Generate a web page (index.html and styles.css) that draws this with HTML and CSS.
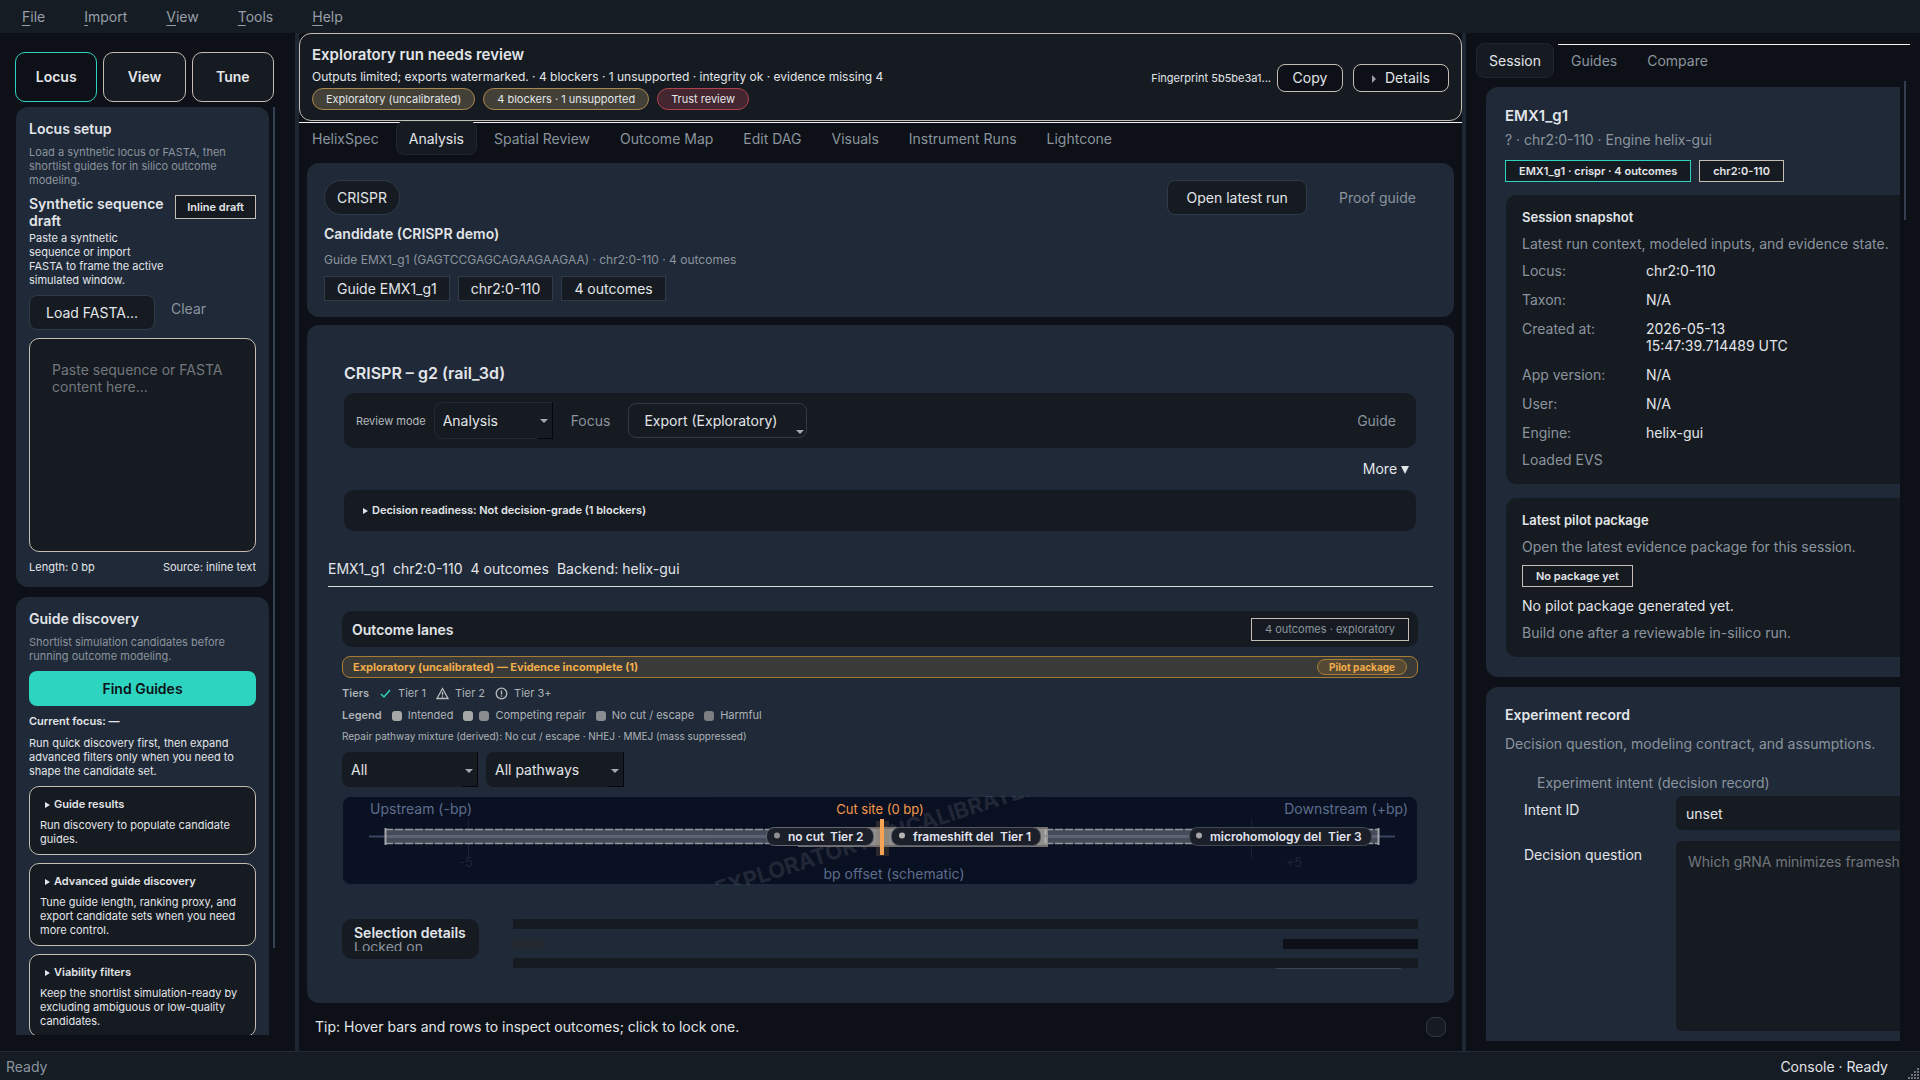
FILE: index.html
```html
<!DOCTYPE html>
<html lang="en">
<head>
<meta charset="utf-8">
<title>Helix</title>
<link rel="stylesheet" href="styles.css">
</head>
<body>
<div class="app">
  <nav class="menubar">
    <a href="#file"><u>F</u>ile</a>
    <a href="#import"><u>I</u>mport</a>
    <a href="#view"><u>V</u>iew</a>
    <a href="#tools"><u>T</u>ools</a>
    <a href="#help"><u>H</u>elp</a>
  </nav>

  <div class="workspace">
    <aside class="left">
      <div class="modes">
        <button class="mode mode-on">Locus</button>
        <button class="mode">View</button>
        <button class="mode">Tune</button>
      </div>
      <div class="left-scroll">
        <div class="left-cards">
          <section class="side-card">
            <h2 class="h-card">Locus setup</h2>
            <p class="small muted desc">Load a synthetic locus or FASTA, then shortlist guides for in silico outcome modeling.</p>
            <div class="draft">
              <div class="draft-text">
                <h3 class="h-card">Synthetic sequence draft</h3>
                <p class="small">Paste a synthetic sequence or import FASTA to frame the active simulated window.</p>
              </div>
              <span class="tag tag-draft">Inline draft</span>
            </div>
            <div class="load-row">
              <button class="btn btn-load">Load FASTA...</button>
              <button class="btn-flat">Clear</button>
            </div>
            <textarea class="seq" aria-label="Sequence" placeholder="Paste sequence or FASTA content here..."></textarea>
            <div class="seq-foot small"><span>Length: 0 bp</span><span>Source: inline text</span></div>
          </section>
          <section class="side-card">
            <h2 class="h-card">Guide discovery</h2>
            <p class="small muted desc">Shortlist simulation candidates before running outcome modeling.</p>
            <button class="btn-primary">Find Guides</button>
            <p class="small strong focus-line">Current focus: —</p>
            <p class="small">Run quick discovery first, then expand advanced filters only when you need to shape the candidate set.</p>
            <div class="fold">
              <button class="fold-head"><i class="tri-r"></i>Guide results</button>
              <p class="small">Run discovery to populate candidate guides.</p>
            </div>
            <div class="fold">
              <button class="fold-head"><i class="tri-r"></i>Advanced guide discovery</button>
              <p class="small">Tune guide length, ranking proxy, and export candidate sets when you need more control.</p>
            </div>
            <div class="fold">
              <button class="fold-head"><i class="tri-r"></i>Viability filters</button>
              <p class="small">Keep the shortlist simulation-ready by excluding ambiguous or low-quality candidates.</p>
            </div>
          </section>
        </div>
        <div class="scrollbar scrollbar-left"></div>
      </div>
    </aside>

    <div class="splitter"></div>

    <main class="center">
      <header class="banner">
        <div class="banner-text">
          <h1 class="banner-title">Exploratory run needs review</h1>
          <p class="banner-sub">Outputs limited; exports watermarked. · 4 blockers · 1 unsupported · integrity ok · evidence missing 4</p>
          <div class="pills">
            <span class="pill pill-warn">Exploratory (uncalibrated)</span>
            <span class="pill pill-warn">4 blockers · 1 unsupported</span>
            <span class="pill pill-bad">Trust review</span>
          </div>
        </div>
        <div class="banner-actions">
          <span class="small">Fingerprint 5b5be3a1...</span>
          <button class="btn-outline">Copy</button>
          <button class="btn-outline btn-details"><i class="tri-r tri-dim"></i>Details</button>
        </div>
      </header>

      <nav class="tabs tabs-main">
        <a class="tab" href="#helixspec">HelixSpec</a>
        <a class="tab tab-on" href="#analysis">Analysis</a>
        <a class="tab" href="#spatial">Spatial Review</a>
        <a class="tab" href="#map">Outcome Map</a>
        <a class="tab" href="#dag">Edit DAG</a>
        <a class="tab" href="#visuals">Visuals</a>
        <a class="tab" href="#runs">Instrument Runs</a>
        <a class="tab" href="#lightcone">Lightcone</a>
      </nav>

      <div class="center-body">
        <section class="panel candidate">
          <div class="cand-top">
            <span class="crispr">CRISPR</span>
            <div class="cand-actions">
              <button class="btn btn-open">Open latest run</button>
              <button class="btn-flat">Proof guide</button>
            </div>
          </div>
          <h2 class="h-card">Candidate (CRISPR demo)</h2>
          <p class="cand-sub">Guide EMX1_g1 (GAGTCCGAGCAGAAGAAGAA) · chr2:0-110 · 4 outcomes</p>
          <div class="chips">
            <span class="chip">Guide EMX1_g1</span>
            <span class="chip">chr2:0-110</span>
            <span class="chip">4 outcomes</span>
          </div>
        </section>

        <section class="panel run">
          <div class="run-head">
            <h2 class="run-title">CRISPR – g2 (rail_3d)</h2>
            <div class="toolbar">
              <label class="small soft" for="mode">Review mode</label>
              <span class="combo combo-mode"><select id="mode"><option>Analysis</option></select></span>
              <button class="btn-flat btn-focus">Focus</button>
              <button class="btn btn-export">Export (Exploratory)<i class="tri-d"></i></button>
              <button class="btn-flat btn-guide">Guide</button>
            </div>
            <button class="more">More <i class="tri-more"></i></button>
            <button class="decision"><i class="tri-r"></i>Decision readiness: Not decision-grade (1 blockers)</button>
          </div>

          <div class="meta"><span>EMX1_g1</span><span>chr2:0-110</span><span>4 outcomes</span><span>Backend: helix-gui</span></div>

          <div class="lanes">
            <div class="lanes-head">
              <h3 class="h-card">Outcome lanes</h3>
              <span class="lanes-tag">4 outcomes · exploratory</span>
            </div>
            <div class="alert">
              <span>Exploratory (uncalibrated) — Evidence incomplete (1)</span>
              <button class="pilot">Pilot package</button>
            </div>
            <div class="legend">
              <b>Tiers</b>
              <span class="key"><svg width="13" height="13" viewBox="0 0 13 13"><path d="M2 7l3 3 6-7" fill="none" stroke="#2dd4bf" stroke-width="1.5"/></svg>Tier 1</span>
              <span class="key"><svg width="13" height="13" viewBox="0 0 13 13"><path d="M6.500 1.500L12 11.500H1zM6.500 5v3.500M6.500 9.300v1.200" fill="none" stroke="#b9bcbc" stroke-width="1.300"/></svg>Tier 2</span>
              <span class="key"><svg width="13" height="13" viewBox="0 0 13 13"><circle cx="6.500" cy="6.500" r="5.300" fill="none" stroke="#b9bcbc" stroke-width="1.300"/><path d="M6.500 3.500v4M6.500 8.500v1.300" stroke="#b9bcbc" stroke-width="1.300"/></svg>Tier 3+</span>
            </div>
            <div class="legend legend-wide">
              <b>Legend</b>
              <span class="key"><i class="sw sw-a"></i>Intended</span>
              <span class="key"><i class="sw sw-a"></i><i class="sw sw-b"></i>Competing repair</span>
              <span class="key"><i class="sw sw-b"></i>No cut / escape</span>
              <span class="key"><i class="sw sw-c"></i>Harmful</span>
            </div>
            <p class="mixture">Repair pathway mixture (derived): No cut / escape · NHEJ · MMEJ (mass suppressed)</p>
            <div class="filters">
              <span class="combo combo-tier"><select aria-label="Tier"><option>All</option></select></span>
              <span class="combo combo-path"><select aria-label="Pathway"><option>All pathways</option></select></span>
            </div>
            <svg class="track" viewBox="0 0 1076 89" role="img" aria-label="Outcome lanes">
              <defs><clipPath id="frame"><rect width="1076" height="89" rx="8"/></clipPath></defs>
              <rect x="0.500" y="0.500" width="1075" height="88" rx="8" fill="#0a1122" stroke="#1d2b40"/>
              <g clip-path="url(#frame)">
                <path d="M126.500 24v38M909.500 24v38" stroke="#1a2235"/>
                <text class="t-tick" x="124" y="71" text-anchor="middle">-5</text>
                <text class="t-tick" x="952" y="71" text-anchor="middle">+5</text>
                <path d="M27 40.500H1053" stroke="#3a4560" stroke-width="2"/>
                <rect x="43" y="33" width="994" height="15" fill="#454b59"/>
                <path d="M43 40.500H1037" stroke="#5b6375" stroke-width="3"/>
                <path d="M43 33.500H1037M43 47.500H1037" stroke="#94979d" stroke-width="1.500" stroke-dasharray="8 2"/>
                <path d="M43.500 32v17M1036.500 32v17" stroke="#a4a6ab" stroke-width="2"/>
                <rect x="456" y="31" width="250" height="20" fill="#918f8e"/>
                <rect x="456" y="31" width="250" height="2" fill="#74716f"/>
                <rect x="456" y="49" width="250" height="2" fill="#74716f"/>
                <path d="M703.500 33v16" stroke="#b5b5b8" stroke-width="1.500" stroke-dasharray="6 2"/>
                <text class="t-mark" transform="translate(537 49) rotate(-18)" text-anchor="middle">EXPLORATORY UNCALIBRATED</text>
                <rect x="534" y="25" width="13" height="35" fill="#8a6a4a" opacity="0.250"/>
                <rect x="424.500" y="31.500" width="107" height="18" rx="8" fill="#1b1f29" stroke="#65686f"/>
                <rect x="549.500" y="31.500" width="149" height="18" rx="8" fill="#1b1f29" stroke="#55575e"/>
                <rect x="847.500" y="31.500" width="182" height="18" rx="8" fill="#1b1f29" stroke="#44484f"/>
                <circle cx="435" cy="39.500" r="3" fill="#8e8e90"/>
                <circle cx="560" cy="39.500" r="3" fill="#b4b4b4"/>
                <circle cx="857" cy="39.500" r="3" fill="#a4a4a6"/>
                <text class="t-lane" x="446" y="45">no cut</text><text class="t-lane" x="488" y="45">Tier 2</text>
                <text class="t-lane" x="571" y="45">frameshift del</text><text class="t-lane" x="658" y="45">Tier 1</text>
                <text class="t-lane" x="868" y="45">microhomology del</text><text class="t-lane" x="986" y="45">Tier 3</text>
                <rect x="538" y="23" width="4" height="36" fill="#f5a355"/>
                <text class="t-axis" x="28" y="18">Upstream (-bp)</text>
                <text class="t-axis" x="1066" y="18" text-anchor="end">Downstream (+bp)</text>
                <text class="t-cut" x="538" y="18" text-anchor="middle">Cut site (0 bp)</text>
                <text class="t-axis" x="552" y="83" text-anchor="middle">bp offset (schematic)</text>
              </g>
            </svg>
            <div class="selection">
              <div class="sel-box">
                <h3 class="h-card">Selection details</h3>
                <div class="sel-clip">Locked on</div>
              </div>
              <div class="sel-rows">
                <div class="sel-bar"></div>
                <div class="sel-mid"><i class="stub-l"></i><i class="stub-r"></i></div>
                <div class="sel-bar"></div>
                <i class="sel-line"></i>
              </div>
            </div>
          </div>
        </section>
      </div>

      <footer class="tip"><span>Tip: Hover bars and rows to inspect outcomes; click to lock one.</span><button class="dot" aria-label="Hint"></button></footer>
    </main>

    <div class="splitter"></div>

    <aside class="right">
      <nav class="tabs tabs-right">
        <a class="tab tab-on" href="#session">Session</a>
        <a class="tab" href="#guides">Guides</a>
        <a class="tab" href="#compare">Compare</a>
      </nav>
      <div class="right-scroll">
        <div class="right-clip">
          <section class="rcard">
            <h2 class="r-title">EMX1_g1</h2>
            <p class="muted r-sub">? · chr2:0-110 · Engine helix-gui</p>
            <div class="r-tags">
              <span class="tag tag-on">EMX1_g1 · crispr · 4 outcomes</span>
              <span class="tag">chr2:0-110</span>
            </div>
            <div class="rbox rbox-snap">
              <h3 class="r-h3">Session snapshot</h3>
              <p class="muted">Latest run context, modeled inputs, and evidence state.</p>
              <dl class="facts">
                <dt>Locus:</dt><dd>chr2:0-110</dd>
                <dt>Taxon:</dt><dd>N/A</dd>
                <dt>Created at:</dt><dd>2026-05-13<br>15:47:39.714489 UTC</dd>
                <dt>App version:</dt><dd>N/A</dd>
                <dt>User:</dt><dd>N/A</dd>
                <dt>Engine:</dt><dd>helix-gui</dd>
              </dl>
              <p class="muted">Loaded EVS</p>
            </div>
            <div class="rbox rbox-pilot">
              <h3 class="r-h3">Latest pilot package</h3>
              <p class="muted">Open the latest evidence package for this session.</p>
              <span class="tag">No package yet</span>
              <p>No pilot package generated yet.</p>
              <p class="muted">Build one after a reviewable in-silico run.</p>
            </div>
          </section>
          <section class="rcard">
            <h2 class="h-card">Experiment record</h2>
            <p class="muted rec-sub">Decision question, modeling contract, and assumptions.</p>
            <p class="muted rec-intent">Experiment intent (decision record)</p>
            <div class="form">
              <label for="intent">Intent ID</label>
              <input id="intent" class="field" type="text" value="unset">
              <label for="question">Decision question</label>
              <textarea id="question" class="field field-area" placeholder="Which gRNA minimizes frameshift risk?"></textarea>
            </div>
          </section>
        </div>
        <div class="scrollbar scrollbar-right"></div>
      </div>
    </aside>
  </div>

  <footer class="status">
    <span class="muted">Ready</span>
    <span>Console · Ready</span>
    <svg class="grip" width="12" height="12" viewBox="0 0 12 12" fill="#70757c"><path d="M9 0h2v2H9zM6 3h2v2H6zM9 3h2v2H9zM3 6h2v2H3zM6 6h2v2H6zM9 6h2v2H9zM0 9h2v2H0zM3 9h2v2H3zM6 9h2v2H6zM9 9h2v2H9z"/></svg>
  </footer>
</div>
</body>
</html>
```
FILE: styles.css
```css
* { box-sizing: border-box; }
:root {
  --bg: #0d1117;
  --bar: #161c24;
  --card: #1f2937;
  --inner: #161b22;
  --text: #e2e5e9;
  --muted: #8b949e;
  --line: #c4bdb3;
  --teal: #2dd4bf;
}
body {
  margin: 0;
  background: var(--bg);
  color: var(--text);
  font: 14px/17px Inter, "Noto Sans", sans-serif;
}
h1, h2, h3, p, dl, dd { margin: 0; }
button, select, input, textarea { font: inherit; color: inherit; margin: 0; }
button { background: none; border: 0; padding: 0; text-align: center; }
a { color: inherit; text-decoration: none; }
.muted { color: var(--muted); }
.soft { color: #b4b9be; }
.small { font-size: 11px; line-height: 14px; }
.strong { font-weight: 600; }

.app { height: 100vh; display: flex; flex-direction: column; overflow: hidden; }
.menubar {
  flex: none; height: 33px; padding: 0 22px; display: flex; align-items: center; gap: 39px;
  background: var(--bar); color: #979ea7;
}
.menubar u { text-underline-offset: 3px; }
.workspace { flex: 1; min-height: 0; display: flex; }
.splitter { flex: none; width: 4px; background: #1c2733; }

/* left rail */
.left { flex: none; width: 295px; padding: 19px 20px 16px 15px; display: flex; flex-direction: column; }
.modes { display: grid; grid-template-columns: repeat(3, 1fr); gap: 6px; padding-right: 1px; }
.mode { height: 50px; padding-bottom: 2px; border: 1px solid var(--line); border-radius: 10px; background: var(--inner); font-weight: 600; }
.mode-on { border-color: var(--teal); background: var(--bg); }
.left-scroll { flex: 1; min-height: 0; display: flex; gap: 4px; padding-top: 5px; }
.left-cards { flex: 1; min-width: 0; overflow: hidden; margin-left: 1px; display: flex; flex-direction: column; gap: 10px; }
.scrollbar { flex: none; width: 2px; background: #334155; }
.scrollbar-left { height: 841px; }
.side-card { flex: none; padding: 13px; border-radius: 12px; background: var(--card); }
.h-card { font-size: 14px; line-height: 17px; font-weight: 600; }
.desc { margin-top: 8px; }
.draft { display: flex; justify-content: space-between; margin-top: 8px; }
.draft-text { width: 137px; }
.draft-text .h-card { margin-bottom: 2px; }
.tag {
  display: inline-block; align-self: flex-start; padding: 3px 13px; border: 1px solid var(--line);
  background: var(--inner); font-size: 11px; line-height: 14px; font-weight: 600; white-space: nowrap;
}
.tag-on { border-color: var(--teal); }
.tag-draft { padding: 4px 11px; }
.load-row { display: flex; align-items: flex-start; gap: 16px; margin-top: 8px; }
.btn { height: 35px; border: 1px solid #303b4a; border-radius: 8px; background: var(--inner); }
.btn-load { width: 126px; }
.btn-flat { height: 35px; color: var(--muted); }
.load-row .btn-flat { height: 27px; }
.seq {
  display: block; width: 100%; height: 214px; margin-top: 8px; padding: 22px; resize: none;
  border: 1px solid var(--line); border-radius: 10px; background: var(--inner);
}
.seq::placeholder, .field::placeholder { color: #72777d; opacity: 1; }
.seq-foot { display: flex; justify-content: space-between; margin: 8px 0 0; }
.btn-primary {
  display: block; width: 100%; height: 35px; margin: 8px 0; border-radius: 8px;
  background: var(--teal); color: #0d1117; font-weight: 600;
}
.focus-line { margin-bottom: 8px; }
.fold { margin-top: 8px; padding: 10px 10px 8px; border: 1px solid var(--line); border-radius: 10px; background: var(--inner); }
.fold-head { display: block; padding-left: 5px; margin-bottom: 7px; font-size: 11px; line-height: 14px; font-weight: 600; }
.tri-r {
  display: inline-block; margin-right: 4px; border: 3px solid transparent;
  border-left: 5px solid var(--text); border-right: 0;
}

/* center */
.center { flex: 1; min-width: 0; display: flex; flex-direction: column; }
.banner {
  flex: none; height: 88px; padding: 1px 12px 0; border: 1px solid var(--line); border-radius: 12px;
  background: var(--inner); display: flex; align-items: center; justify-content: space-between;
}
.banner-title { font-size: 15px; line-height: 18px; font-weight: 600; }
.banner-sub { font-size: 12px; line-height: 15px; margin: 5px 0 4px; }
.pills { display: flex; gap: 8px; }
.pill { padding: 2px 13px; border: 1px solid; border-radius: 11px; font-size: 11px; line-height: 16px; }
.pill-warn { border-color: #a8874c; background: #434038; }
.pill-bad { border-color: #b0434d; background: #43262f; }
.banner-actions { display: flex; align-items: center; gap: 10px; }
.btn-outline { width: 66px; height: 28px; border: 1px solid var(--line); border-radius: 8px; background: var(--bg); }
.btn-outline + .btn-outline { width: 96px; }
.tri-dim { margin-right: 9px; border-width: 4px; border-left-color: #9a9fa6; border-left-width: 4px; }
.banner-actions .small { margin-right: -4px; }

.tabs { display: flex; gap: 4px; color: var(--muted); }
.tab { height: 34px; padding: 0 12px; border: 1px solid transparent; border-radius: 8px; line-height: 34px; }
.tab-on { background: var(--inner); border-color: #1d2733; color: var(--text); }
.tabs-main { flex: none; background: linear-gradient(#f2f2f2, #f2f2f2) 0 1px / 100% 1px no-repeat; }
.center-body { flex: 1; min-height: 0; padding: 8px 8px 0; display: flex; flex-direction: column; gap: 8px; }
.panel { background: var(--card); border-radius: 12px; }
.candidate { flex: none; padding: 17px; height: 154px; }
.cand-top { display: flex; justify-content: space-between; margin-bottom: 10px; }
.crispr { height: 35px; padding: 0 12px; border: 1px solid #303b4a; border-radius: 17px; background: var(--inner); line-height: 33px; }
.cand-actions { display: flex; gap: 32px; padding-right: 21px; }
.btn-open { width: 140px; }
.cand-sub { margin: 9px 0 8px; color: var(--muted); font-size: 12px; line-height: 17px; }
.chips { display: flex; gap: 8px; }
.chip { padding: 2px 12px; border: 1px solid #303b4a; background: var(--inner); line-height: 19px; }

.run { flex: 1; min-height: 0; padding: 38px 21px 0; }
.run-head { padding: 0 17px 0 16px; }
.run-title { font-size: 16px; line-height: 20px; font-weight: 600; }
.toolbar {
  height: 55px; margin-top: 10px; padding: 0 20px 0 12px; border-radius: 10px; background: var(--inner);
  display: flex; align-items: center;
}
.combo { position: relative; display: block; height: 37px; background: var(--inner); border-radius: 8px 0 0 8px; }
.combo select {
  width: 100%; height: 100%; padding: 0 8px; border: 1px solid transparent; border-radius: 8px 0 0 8px;
  background: none; appearance: none;
}
.combo::before {
  content: ""; position: absolute; inset: 0 0 0 auto; width: 15px;
  border: solid #05070a; border-width: 0 1px 1px 0;
}
.combo::after, .tri-d {
  content: ""; position: absolute; right: 5px; top: 17px;
  border: 4px solid transparent; border-top-color: #a6aab0; border-bottom: 0;
}
.combo-mode { width: 119px; margin-left: 8px; }
.combo-mode select { border: 1px solid #1f2937; border-right: 0; }
.btn-focus { margin: 0 18px; }
.btn-export { position: relative; width: 179px; padding-right: 14px; }
.btn-export .tri-d { right: 2px; top: 26px; }
.btn-guide { margin-left: auto; }
.more { display: block; margin: 12px 7px 13px auto; }
.tri-more { display: inline-block; border: 4px solid transparent; border-top: 8px solid var(--text); border-bottom: 0; }
.decision {
  display: block; width: 100%; height: 41px; padding: 0 19px; border-radius: 10px; background: var(--inner);
  text-align: left; font-size: 11px; font-weight: 600;
}
.meta { display: flex; gap: 8px; margin-top: 29px; padding-bottom: 9px; border-bottom: 1px solid #dcdcda; }
.lanes { padding: 24px 15px 0 14px; }
.lanes-head {
  height: 36px; padding: 0 9px 0 10px; border-radius: 10px; background: var(--inner);
  display: flex; align-items: center; justify-content: space-between;
}
.lanes-tag { padding: 3px 13px; border: 1px solid var(--line); color: var(--muted); font-size: 11px; line-height: 15px; }
.alert {
  height: 22px; margin-top: 9px; padding: 0 10px; border: 1px solid #a87c32; border-radius: 8px; background: #3a3b39;
  display: flex; align-items: center; justify-content: space-between;
  color: #f0ad4a; font-size: 11px; line-height: 14px; font-weight: 700;
}
.pilot { height: 16px; padding: 0 11px; border: 1px solid #a87c32; border-radius: 8px; background: #574a34; font-size: 10px; line-height: 14px; font-weight: 700; }
.legend { display: flex; align-items: center; gap: 10px; margin-top: 8px; color: #aeb3b8; font-size: 11px; line-height: 15px; }
.legend b { font-weight: 600; }
.legend-wide { margin-top: 7px; }
.key { display: flex; align-items: center; gap: 6px; }
.sw { width: 10px; height: 10px; border-radius: 3px; }
.sw-a { background: #a6a8a8; }
.sw-b { background: #8a8d8f; }
.sw-c { background: #7c7f82; }
.mixture { margin: 6px 0 9px; color: #aeb3b8; font-size: 10px; line-height: 14px; }
.filters { display: flex; gap: 8px; }
.filters .combo { height: 35px; }
.combo-tier { width: 136px; }
.combo-path { width: 138px; }
.track { display: block; width: 100%; margin-top: 9px; }
.t-axis { font-size: 14px; fill: #5d6d8c; }
.t-tick { font-size: 13px; fill: #1d2537; }
.t-cut { font-size: 13px; fill: #f5994a; }
.t-lane { font-size: 12px; font-weight: 600; fill: #e2e5f0; }
.t-mark { font-size: 22px; font-weight: 700; fill: #8a8f9a; opacity: 0.18; }
.selection { display: flex; gap: 34px; margin-top: 34px; }
.sel-box { width: 137px; height: 40px; padding: 5px 11px 0 12px; border-radius: 10px; background: var(--inner); }
.sel-clip { height: 9px; margin-top: 1px; overflow: hidden; display: flex; align-items: center; color: var(--muted); }
.sel-rows { position: relative; flex: 1; height: 49px; display: flex; flex-direction: column; justify-content: space-between; }
.sel-bar { height: 10px; background: var(--inner); }
.sel-mid { display: flex; justify-content: space-between; }
.stub-l { width: 31px; height: 10px; background: #22282e; }
.stub-r { width: 135px; height: 10px; background: var(--bg); }
.sel-line { position: absolute; right: 17px; bottom: -1px; width: 125px; height: 1px; background: #3a4458; }
.tip { flex: none; height: 48px; padding: 0 16px 1px; display: flex; align-items: center; justify-content: space-between; }
.dot { width: 20px; height: 20px; border: 1px solid #303b4a; border-radius: 8px; background: var(--inner); }

/* right dock */
.right { flex: none; width: 454px; padding: 10px 10px 10px; display: flex; flex-direction: column; }
.tabs-right { background: linear-gradient(#f2f2f2, #f2f2f2) 82px 1px / 100% 1px no-repeat; }
.tabs-right .tab { height: 35px; }
.right-scroll { flex: 1; min-height: 0; display: flex; justify-content: space-between; padding: 3px 4px 0 10px; }
.right-clip { width: 414px; overflow: hidden; display: flex; flex-direction: column; gap: 10px; padding-top: 6px; }
.rcard { flex: none; width: 500px; padding: 20px 19px; border-radius: 12px; background: var(--card); }
.rcard + .rcard { padding-top: 19px; }
.scrollbar-right { height: 139px; background: #343e50; }
.r-title { font-size: 15px; line-height: 18px; font-weight: 600; }
.r-sub { margin: 6px 0 12px; }
.r-tags { display: flex; gap: 8px; }
.rbox { margin-left: 1px; padding: 14px 16px; border-radius: 10px; background: var(--inner); }
.rbox-snap { margin-top: 13px; height: 289px; }
.rbox-pilot { margin-top: 14px; display: flex; flex-direction: column; gap: 10px; height: 159px; }
.r-h3 { font-size: 13px; line-height: 16px; font-weight: 600; }
.rbox-snap .r-h3 { margin-bottom: 10px; }
.facts { display: grid; grid-template-columns: 124px 1fr; row-gap: 12px; margin: 10px 0; }
.facts dt { color: var(--muted); }
.rec-sub { margin-top: 12px; }
.rec-intent { margin: 22px 0 5px 32px; }
.form { display: grid; grid-template-columns: 133px 1fr; column-gap: 19px; row-gap: 11px; margin-left: 19px; }
.form label { padding-top: 5px; }
.field { display: block; width: 100%; height: 34px; padding: 0 10px; border: 0; border-radius: 6px; background: var(--inner); }
.field-area { height: 190px; padding: 12px; resize: none; white-space: nowrap; overflow: hidden; }

.status {
  flex: none; height: 29px; padding: 0 32px 0 6px; border-top: 1px solid #222c38; background: var(--bar);
  display: flex; align-items: center; justify-content: space-between; position: relative;
}
.grip { position: absolute; right: 0; bottom: 0; }
```
